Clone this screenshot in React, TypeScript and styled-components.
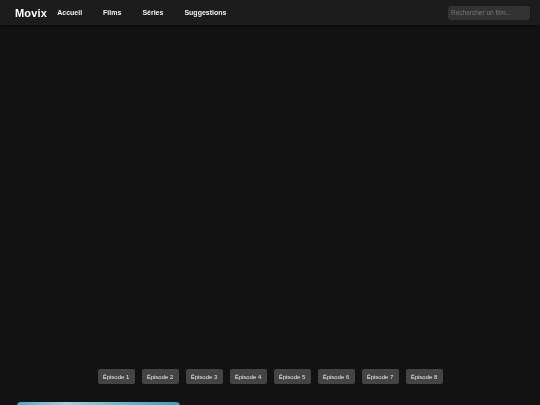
import styled, { createGlobalStyle } from 'styled-components';

const Global = createGlobalStyle`
  html, body {
    margin: 0;
    padding: 0;
    background: #121212;
    color: #fff;
    font-family: "Liberation Sans", Arial, sans-serif;
    overflow: hidden;
    -webkit-font-smoothing: antialiased;
  }
`;

const Page = styled.div`
  display: flex;
  flex-direction: column;
  height: 405px;
  overflow: hidden;
`;

const Header = styled.header`
  flex: none;
  height: 25px;
  background: #1c1c1c;
  display: flex;
  align-items: center;
  padding: 0 10px 0 15px;
  box-shadow: 0 1px 2px rgba(0, 0, 0, 0.5);
  will-change: transform;
`;

const Logo = styled.div`
  font-size: 11px;
  font-weight: bold;
  letter-spacing: 0.2px;
  margin-right: 10px;
`;

const Nav = styled.nav`
  display: flex;
  gap: 21px;
  flex: 1;
`;

const NavLink = styled.a`
  color: #f2f2f2;
  font-size: 7px;
  font-weight: bold;
  text-decoration: none;
  &:visited {
    color: #f2f2f2;
  }
`;

const Search = styled.input`
  width: 82px;
  height: 14px;
  box-sizing: border-box;
  background: #333;
  border: none;
  border-radius: 3px;
  padding: 0 3px;
  font-family: inherit;
  font-size: 6.5px;
  color: #fff;
  &::placeholder {
    color: #777;
  }
`;

const Player = styled.div`
  flex: none;
  height: 344px;
  background: #121212;
`;

const Episodes = styled.div`
  display: flex;
  justify-content: center;
  gap: 7px;
  will-change: transform;
`;

const EpisodeButton = styled.button`
  width: 37px;
  height: 15px;
  padding: 0;
  background: #444;
  color: #e6e6e6;
  border: none;
  border-radius: 2px;
  font-family: inherit;
  font-weight: normal;
  font-size: 6px;
`;

const Cards = styled.div`
  display: flex;
  gap: 10px;
  padding: 18px 17px 0;
`;

const Card = styled.div`
  flex: none;
  width: 163px;
  height: 90px;
  border-radius: 4px;
  background: linear-gradient(90deg, #4ea7c7 0%, #9fd3e3 30%, #6bbad3 60%, #3f9cc0 100%);
`;

const episodes = [1, 2, 3, 4, 5, 6, 7, 8];

export default function App() {
  return (
    <Page>
      <Global />
      <Header>
        <Logo>Movix</Logo>
        <Nav>
          <NavLink href="#">Accueil</NavLink>
          <NavLink href="#">Films</NavLink>
          <NavLink href="#">Séries</NavLink>
          <NavLink href="#">Suggestions</NavLink>
        </Nav>
        <Search placeholder="Rechercher un film..." />
      </Header>
      <Player />
      <Episodes>
        {episodes.map((n) => (
          <EpisodeButton key={n}>Épisode {n}</EpisodeButton>
        ))}
      </Episodes>
      <Cards>
        <Card />
      </Cards>
    </Page>
  );
}
